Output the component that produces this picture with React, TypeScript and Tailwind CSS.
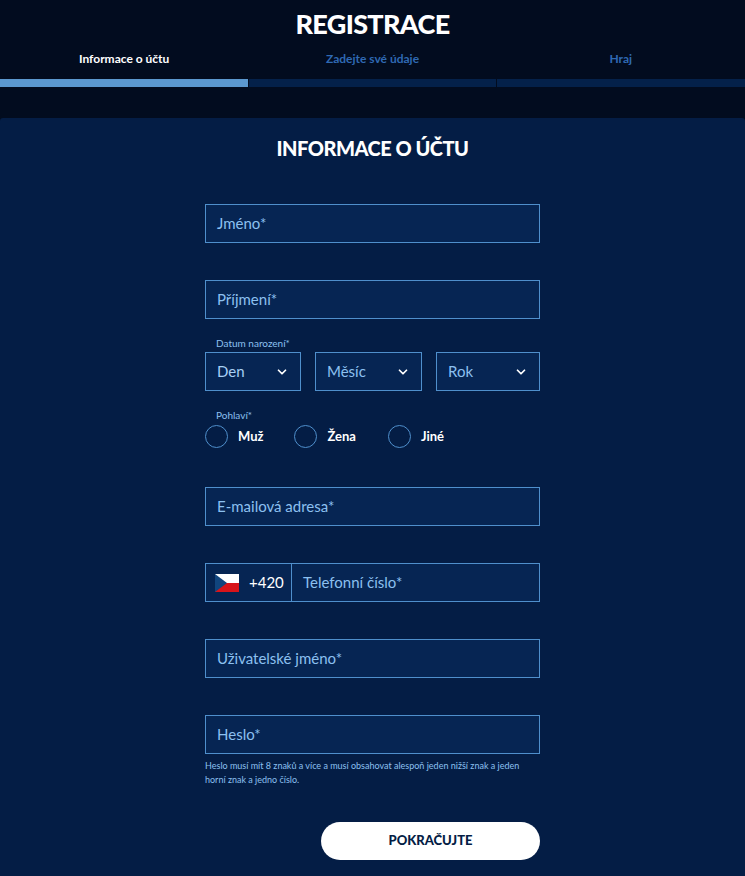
const font = { fontFamily: "Lato, 'Noto Sans', sans-serif" };

const Chevron = () => (
  <svg width="14" height="14" viewBox="0 0 24 24" fill="none" stroke="white" strokeWidth="3" strokeLinecap="round" strokeLinejoin="round">
    <path d="M6 9l6 6 6-6" />
  </svg>
);

const Field = ({ label, mt }: { label: string; mt: string }) => (
  <div className={`${mt} h-[39px] w-full border border-[#4f8fcc] bg-[#062553] flex items-center px-[11px] text-[15px] text-[#8cc0f0]`}>
    {label}
  </div>
);

const Select = ({ label, w }: { label: string; w: string }) => (
  <div className={`${w} h-[39px] border border-[#4f8fcc] bg-[#062553] flex items-center justify-between px-[11px] text-[15px] text-[#8cc0f0]`}>
    <span className={label === "Den" ? "text-[#a8d0f5]" : ""}>{label}</span>
    <Chevron />
  </div>
);

const Radio = ({ label, gap }: { label: string; gap: string }) => (
  <div className={`flex items-center gap-[10px] ${gap}`}>
    <div className="w-[23px] h-[23px] rounded-full border border-[#4f8fcc]" />
    <span className="text-[13px] font-bold text-white">{label}</span>
  </div>
);

export default function App() {
  return (
    <div className="w-[745px] h-[876px] bg-[#020c1f] overflow-hidden" style={font}>
      <div className="h-[118px] flex flex-col">
        <h1 className="text-center text-white font-black text-[27px] leading-none pt-[10px] tracking-tight">REGISTRACE</h1>
        <div className="grid grid-cols-3 mt-[13px] text-[12px] font-bold">
          <div className="text-center text-white">Informace o účtu</div>
          <div className="text-center text-[#2f69b3]">Zadejte své údaje</div>
          <div className="text-center text-[#2f69b3]">Hraj</div>
        </div>
        <div className="grid grid-cols-3 gap-px mt-[11px] h-[8px]">
          <div className="bg-[#5b98cf]" />
          <div className="bg-[#04214a]" />
          <div className="bg-[#04214a]" />
        </div>
      </div>
      <div className="bg-[#041d45] h-[758px] rounded-t-[3px] flex flex-col items-center">
        <h2 className="text-white font-black text-[20px] mt-[20px] leading-none tracking-tight">INFORMACE O ÚČTU</h2>
        <div className="w-[335px] flex flex-col mt-[46px]">
          <Field label="Jméno*" mt="" />
          <Field label="Příjmení*" mt="mt-[37px]" />
          <div className="mt-[19px] pl-[11px] text-[10px] text-[#8cc0f0] leading-none">Datum narození*</div>
          <div className="mt-[4px] flex justify-between">
            <Select label="Den" w="w-[96px]" />
            <Select label="Měsíc" w="w-[107px]" />
            <Select label="Rok" w="w-[104px]" />
          </div>
          <div className="mt-[19px] pl-[11px] text-[10px] text-[#8cc0f0] leading-none">Pohlaví*</div>
          <div className="mt-[5px] flex">
            <Radio label="Muž" gap="" />
            <div className="w-[31px]" />
            <Radio label="Žena" gap="" />
            <div className="w-[32px]" />
            <Radio label="Jiné" gap="" />
          </div>
          <Field label="E-mailová adresa*" mt="mt-[39px]" />
          <div className="mt-[37px] h-[39px] w-full border border-[#4f8fcc] bg-[#062553] flex items-center text-[15px]">
            <div className="w-[86px] h-full border-r border-[#4f8fcc] flex items-center gap-[10px] pl-[9px]">
              <svg width="24" height="18" viewBox="0 0 24 18">
                <rect width="24" height="9" fill="#fff" />
                <rect y="9" width="24" height="9" fill="#d7141a" />
                <path d="M0 0L12 9L0 18Z" fill="#11457e" />
              </svg>
              <span className="text-white">+420</span>
            </div>
            <span className="pl-[11px] text-[#8cc0f0]">Telefonní číslo*</span>
          </div>
          <Field label="Uživatelské jméno*" mt="mt-[37px]" />
          <Field label="Heslo*" mt="mt-[37px]" />
          <p className="mt-[5px] text-[9px] leading-[14px] text-[#8cc0f0]">
            Heslo musí mít 8 znaků a více a musí obsahovat alespoň jeden nižší znak a jeden horní znak a jedno číslo.
          </p>
          <div className="mt-[35px] self-end w-[219px] h-[38px] rounded-full bg-white flex items-center justify-center text-[13px] font-black text-[#041d45]">
            POKRAČUJTE
          </div>
        </div>
      </div>
    </div>
  );
}
